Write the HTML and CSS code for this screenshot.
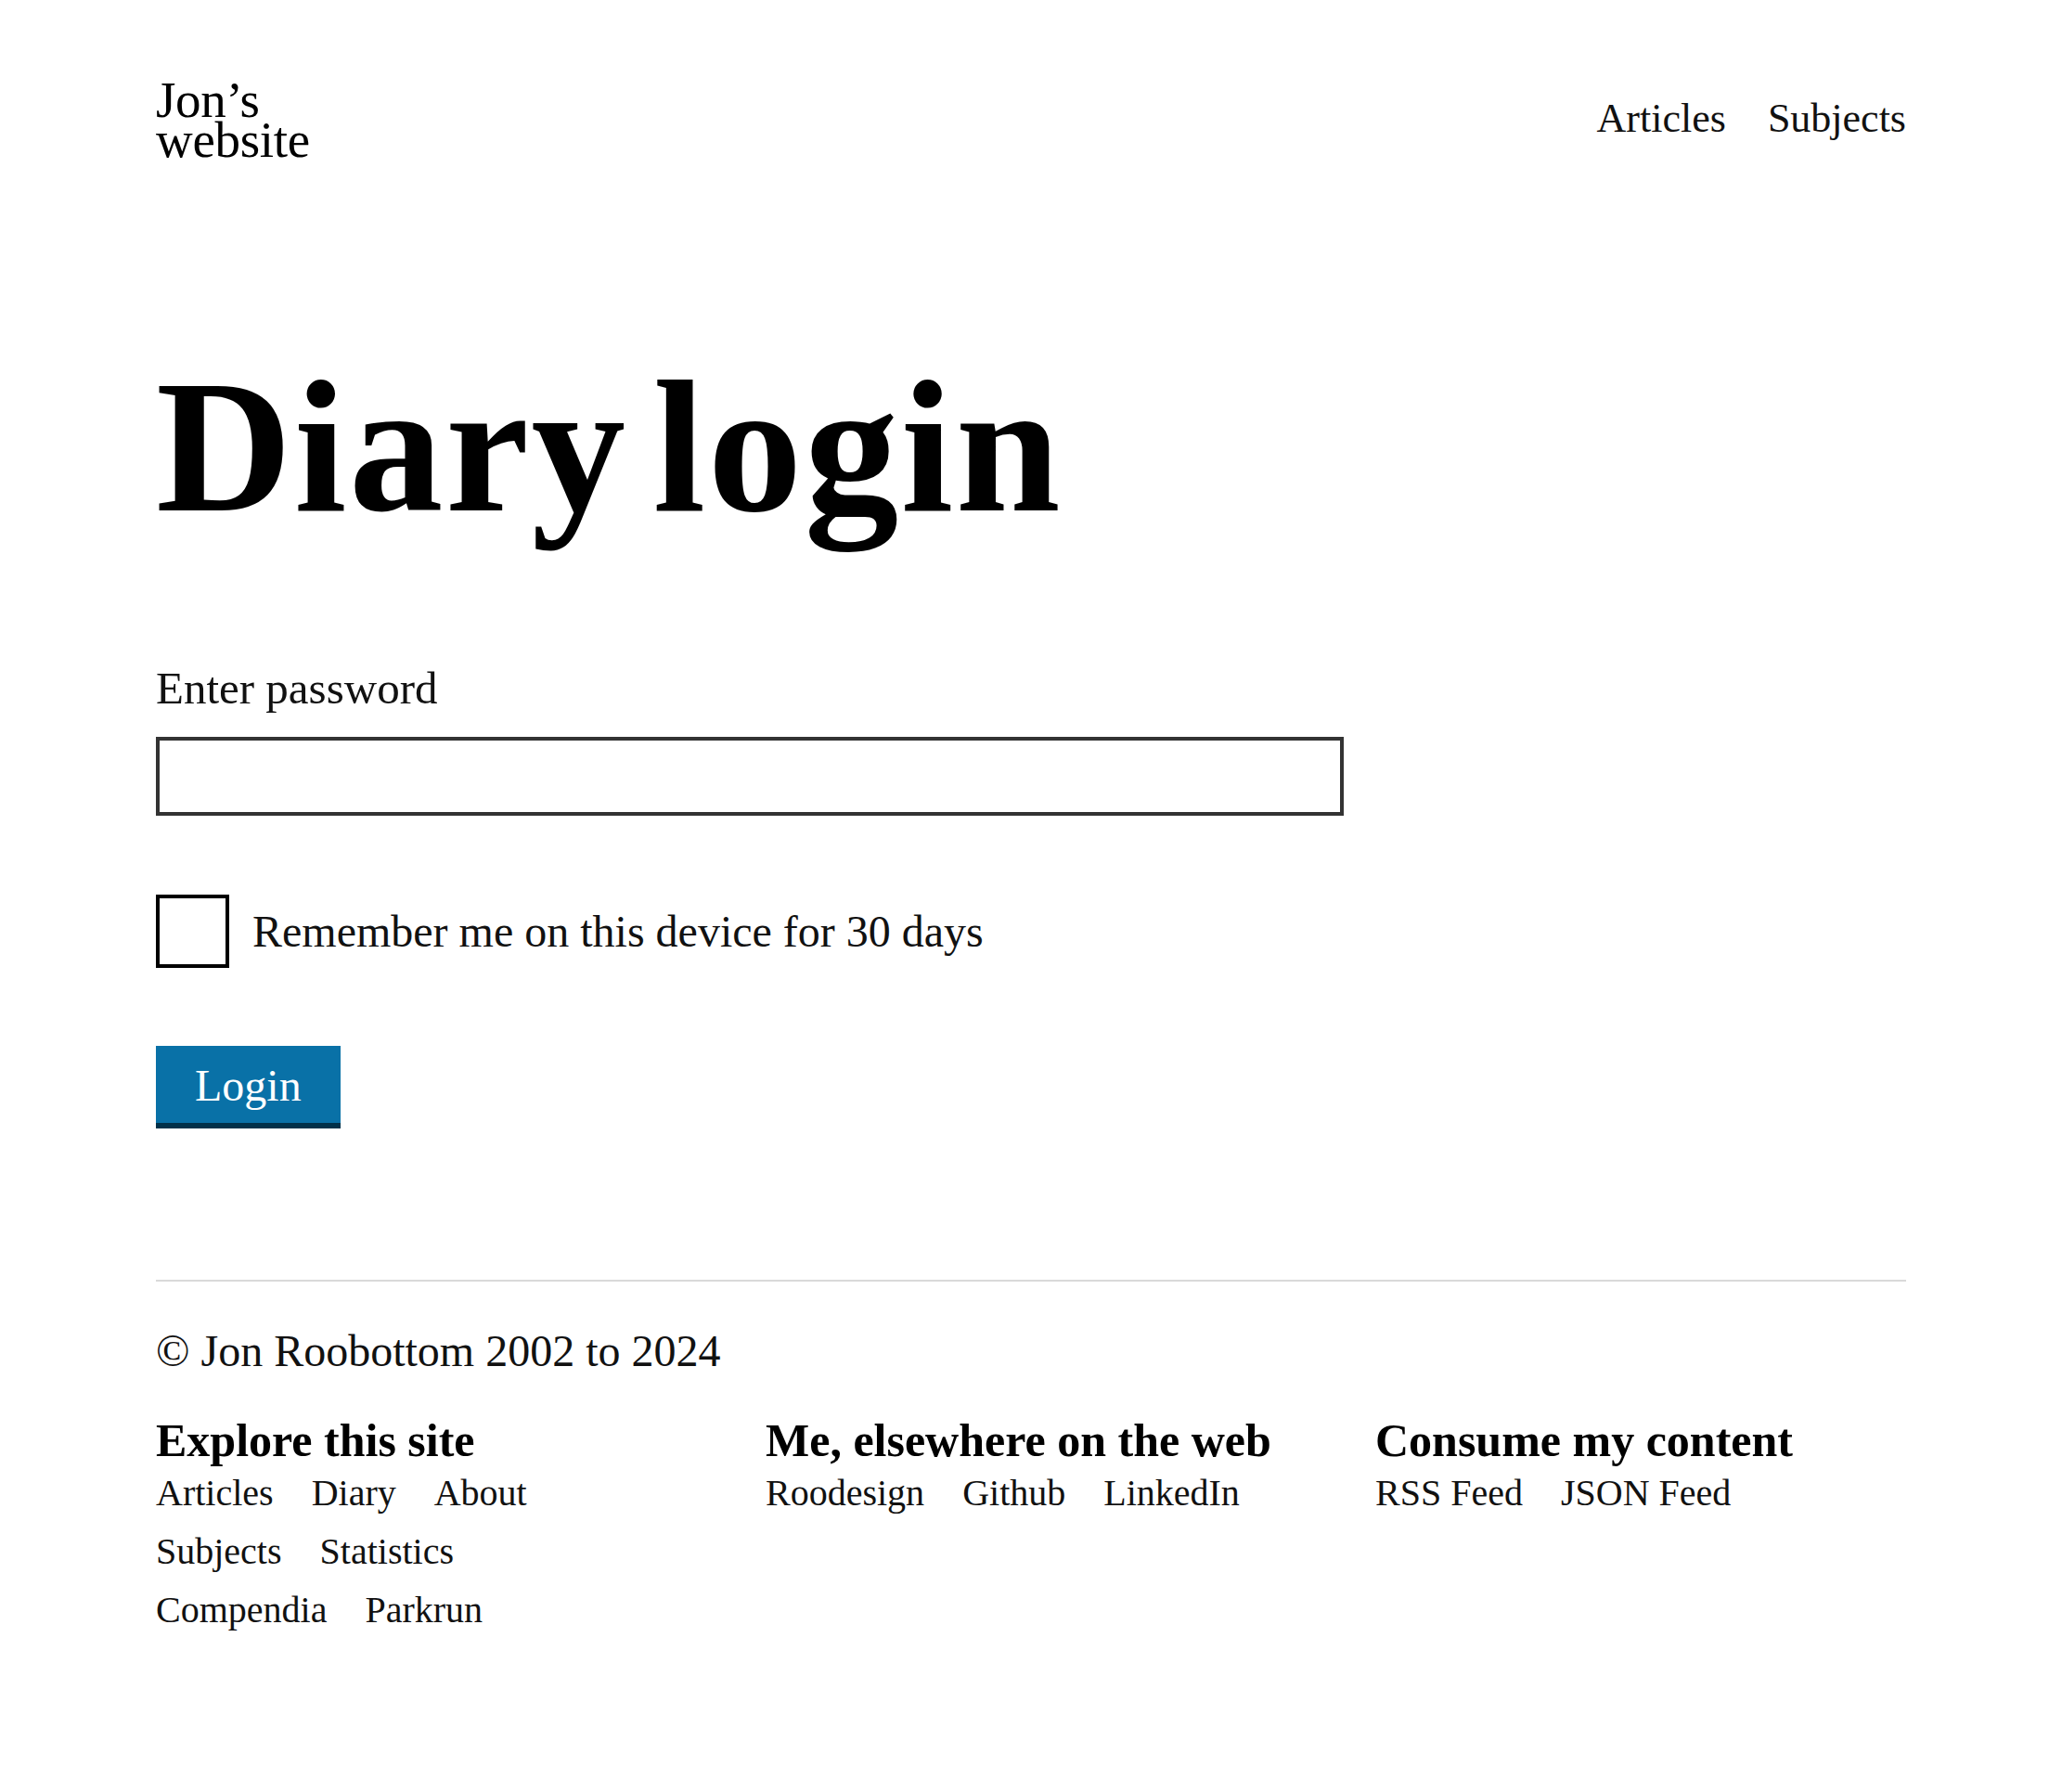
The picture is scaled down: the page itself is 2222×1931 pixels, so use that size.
FILE: index.html
```html
<!DOCTYPE html>
<html lang="en">
<head>
<meta charset="utf-8">
<title>Diary login – Jon's website</title>
<link rel="stylesheet" href="styles.css">
</head>
<body>
<div class="page">
  <header class="site-header">
    <a class="logo" href="#"><span class="logo-line">Jon’s</span><span class="logo-line">website</span></a>
    <nav class="main-nav">
      <a href="#">Articles</a>
      <a href="#">Subjects</a>
    </nav>
  </header>

  <main class="content">
    <h1 class="title">Diary login</h1>
    <form class="login-form">
      <label class="field-label" for="pw">Enter password</label>
      <input class="text-input" id="pw" type="password">
      <label class="remember">
        <span class="checkbox"></span>
        <span class="remember-text">Remember me on this device for 30 days</span>
      </label>
      <button class="btn" type="button">Login</button>
    </form>
  </main>

  <footer class="site-footer">
    <p class="copyright">© Jon Roobottom 2002 to 2024</p>
    <div class="footer-cols">
      <section class="footer-col">
        <h2 class="footer-heading">Explore this site</h2>
        <ul class="links">
          <li><a href="#">Articles</a></li>
          <li><a href="#">Diary</a></li>
          <li><a href="#">About</a></li>
          <li><a href="#">Subjects</a></li>
          <li><a href="#">Statistics</a></li>
          <li><a href="#">Compendia</a></li>
          <li><a href="#">Parkrun</a></li>
        </ul>
      </section>
      <section class="footer-col">
        <h2 class="footer-heading">Me, elsewhere on the web</h2>
        <ul class="links">
          <li><a href="#">Roodesign</a></li>
          <li><a href="#">Github</a></li>
          <li><a href="#">LinkedIn</a></li>
        </ul>
      </section>
      <section class="footer-col">
        <h2 class="footer-heading">Consume my content</h2>
        <ul class="links">
          <li><a href="#">RSS Feed</a></li>
          <li><a href="#">JSON Feed</a></li>
        </ul>
      </section>
    </div>
  </footer>
</div>
</body>
</html>
```

FILE: styles.css
```css
* { box-sizing: border-box; }

html, body {
  margin: 0;
  padding: 0;
  background: #fff;
}

body {
  font-family: "Liberation Serif", "Times New Roman", serif;
  color: #111;
  font-size: 48px;
  line-height: 1.2;
}

a { color: inherit; text-decoration: none; }

.page {
  padding: 86px 168px 120px;
}

.site-header {
  display: flex;
  justify-content: space-between;
  align-items: flex-start;
}

.logo {
  display: flex;
  flex-direction: column;
  font-size: 55px;
  letter-spacing: -0.3px;
  color: #000;
}

.logo-line {
  display: block;
  height: 43px;
  line-height: 43px;
}

.main-nav {
  display: flex;
  gap: 45px;
  margin-top: 16px;
  font-size: 44px;
}

.title {
  margin: 210px 0 0;
  font-size: 203px;
  line-height: 200px;
  font-weight: 700;
  letter-spacing: 2.5px;
  word-spacing: -26px;
  color: #000;
}

.login-form {
  display: flex;
  flex-direction: column;
  align-items: flex-start;
  margin-top: 131px;
}

.field-label {
  font-size: 49px;
}

.text-input {
  margin-top: 22px;
  width: 1280px;
  height: 85px;
  border: 4px solid #333;
  background: #fff;
  font-size: 40px;
  padding: 0 16px;
  outline: none;
}

.remember {
  display: flex;
  align-items: center;
  gap: 25px;
  margin-top: 85px;
}

.checkbox {
  width: 79px;
  height: 79px;
  border: 4px solid #000;
  background: #fff;
}

.btn {
  margin-top: 84px;
  font-family: inherit;
  font-size: 48px;
  line-height: 1.2;
  color: #fff;
  background: #0971a7;
  border: 0;
  border-bottom: 6px solid #00314a;
  padding: 14px 42px 12px;
  cursor: pointer;
}

.site-footer {
  margin-top: 163px;
  border-top: 2px solid #d9d9d9;
}

.copyright {
  margin: 46px 0 0;
  font-size: 48px;
}

.footer-cols {
  display: grid;
  grid-template-columns: repeat(3, 1fr);
  column-gap: 85px;
  margin-top: 40px;
}

.footer-heading {
  margin: 0;
  font-size: 50px;
  line-height: 1.1;
  font-weight: 700;
  color: #000;
}

.links {
  list-style: none;
  margin: 5px 0 0;
  padding: 0;
  display: flex;
  flex-wrap: wrap;
  column-gap: 41px;
  row-gap: 15px;
  max-width: 540px;
  font-size: 40px;
  line-height: 1.2;
}
```
